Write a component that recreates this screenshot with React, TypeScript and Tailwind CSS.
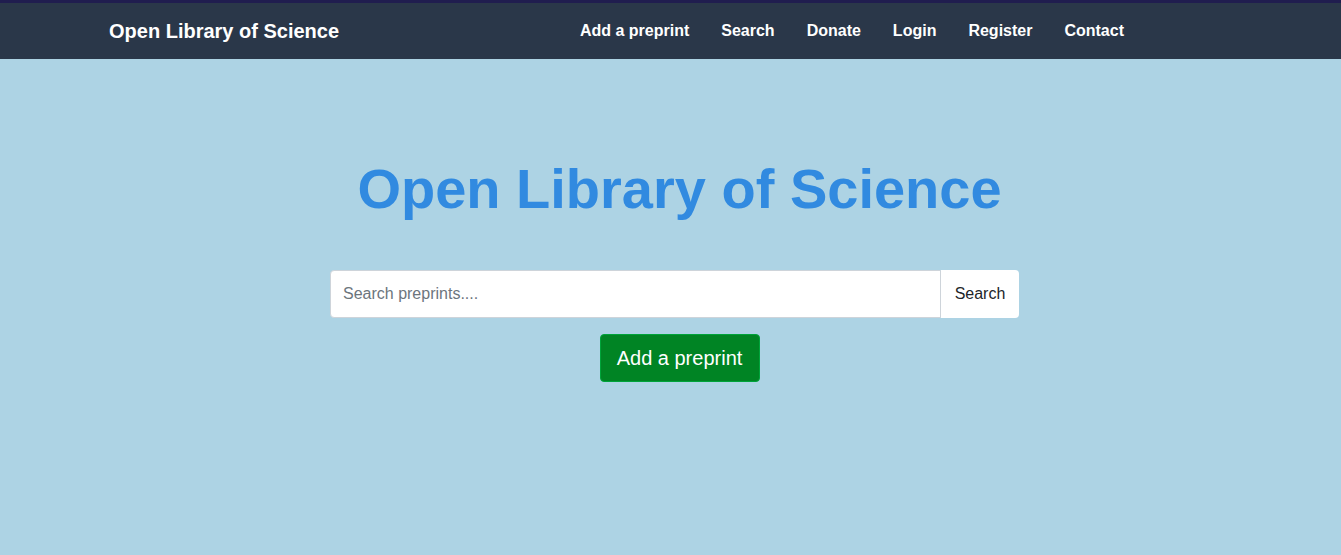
export default function App() {
  const links = ['Add a preprint', 'Search', 'Donate', 'Login', 'Register', 'Contact'];

  return (
    <div className="min-h-screen bg-[#add3e4] font-['Liberation_Sans',Arial,sans-serif]">
      {/* Navbar */}
      <nav className="h-[59px] bg-[#2a3749] border-t-[3px] border-[#201d4f]">
        <div className="flex h-full items-center pl-[109px] pr-[217px]">
          <a href="#" className="text-[20px] font-bold text-white">
            Open Library of Science
          </a>
          <div className="ml-auto flex items-center gap-[32px]">
            {links.map((l) => (
              <a key={l} href="#" className="text-[16px] font-bold text-white">
                {l}
              </a>
            ))}
          </div>
        </div>
      </nav>

      {/* Hero */}
      <main className="flex flex-col items-center pl-[18px]">
        <h1 className="mt-[98px] text-[56px] font-bold leading-[64px] text-[#318ae0]">
          Open Library of Science
        </h1>
        <div className="mt-[49px] flex w-[689px] -translate-x-[5px]">
          <input
            type="text"
            placeholder="Search preprints...."
            className="h-[48px] flex-1 rounded-l-[4px] border border-[#ced4da] bg-white px-[12px] text-[16px] text-gray-800 placeholder:text-[#6c757d] outline-none"
          />
          <button className="h-[48px] w-[78px] rounded-r-[4px] bg-white text-[16px] text-[#212529]">
            Search
          </button>
        </div>
        <button className="mt-[16px] h-[48px] w-[160px] rounded-[4px] border border-[#00a33a] bg-[#008424] text-[20px] text-white">
          Add a preprint
        </button>
      </main>
    </div>
  );
}
